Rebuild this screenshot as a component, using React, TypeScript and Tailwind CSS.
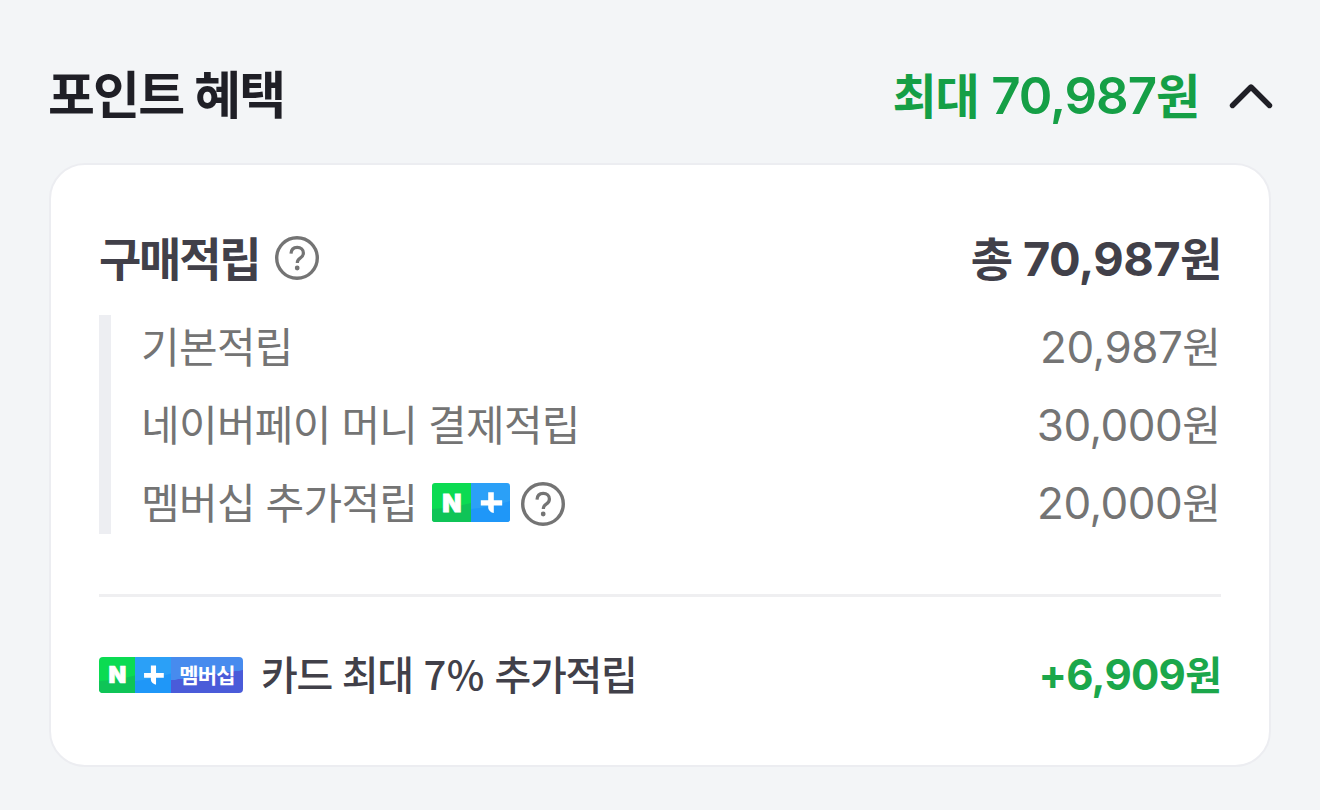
import React from 'react';

const savings = [
  { label: '기본적립', amount: '20,987' },
  { label: '네이버페이 머니 결제적립', amount: '30,000' },
  { label: '멤버십 추가적립', amount: '20,000', membership: true },
];

function HelpIcon() {
  return (
    <svg width="44" height="44" viewBox="0 0 44 44" fill="none" className="shrink-0 text-[#747474]">
      <circle cx="22" cy="22" r="20.3" stroke="currentColor" strokeWidth="3.4" />
      <path
        d="M16 17.6c.2-3.8 2.5-6.3 6.2-6.3s6.2 2.3 6.2 5.6c0 2.5-1.2 3.9-3.2 5.2-2.2 1.4-2.9 2.3-2.9 4.9"
        stroke="currentColor"
        strokeWidth="3.2"
      />
      <circle cx="22.2" cy="32" r="2.4" fill="currentColor" />
    </svg>
  );
}

function NaverPlusMark({ size }: { size: number }) {
  return (
    <svg width={size * 2} height={size} viewBox="0 0 78 39" className="block shrink-0">
      <rect width="39" height="39" fill="#0bdb52" />
      <path d="M0 26 Q20 25 39 20 V39 H0Z" fill="#0fc457" />
      <rect x="39" width="39" height="39" fill="#2ba0f7" />
      <path d="M39 26 Q60 24 78 18 V39 H39Z" fill="#1f97f8" />
      <text
        x="19.8"
        y="28.7"
        textAnchor="middle"
        fill="#fff"
        stroke="#fff"
        strokeWidth="0.8"
        className="font-[Inter,sans-serif] text-[25px] font-black"
      >
        N
      </text>
      <path d="M56.2 9.2h5.6v8h8.4v5.2h-8.4v7.6c-3-.4-5.2-2.4-5.6-5v-2.6h-7.4v-5.2h7.4z" fill="#fff" />
    </svg>
  );
}

type AmountProps = { value: string; prefix?: string; className: string; valueClassName: string };

function Amount({ value, prefix, className, valueClassName }: AmountProps) {
  return (
    <span className={`whitespace-nowrap ${className}`}>
      {prefix && <span>{prefix} </span>}
      <span className={`font-[Inter,sans-serif] ${valueClassName}`}>{value}</span>원
    </span>
  );
}

export default function App() {
  return (
    <div className="min-h-screen bg-[#f3f5f7] px-[49px] font-['Noto_Sans_CJK_KR',sans-serif]">
      {/* Header */}
      <div className="flex h-[163px] items-center justify-between pt-[20px]">
        <h2 className="-ml-px text-[51px] leading-[60px] font-bold tracking-[-1.8px] text-[#1f1f26] [word-spacing:1px]">
          포인트 혜택
        </h2>
        <div className="-mr-0.5 flex items-center gap-[30px]">
          <Amount
            value="70,987"
            prefix="최대"
            className="pt-[5px] text-[48px] leading-[60px] font-bold tracking-[-1.1px] text-[#159f46] [word-spacing:3px]"
            valueClassName="text-[51px] font-semibold tracking-[-1.1px]"
          />
          <svg width="44" height="26" viewBox="0 0 44 26" fill="none" className="mt-2">
            <path
              d="M3.5 22.5 22 4l18.5 18.5"
              stroke="#1f1f26"
              strokeWidth="5.4"
              strokeLinecap="round"
              strokeLinejoin="round"
            />
          </svg>
        </div>
      </div>

      {/* Benefit card */}
      <div className="h-[604px] rounded-[36px] border-2 border-[#ecedf1] bg-white px-12 pt-[62px]">
        <div className="flex h-[62px] items-center justify-between text-[46px] font-bold text-[#414049]">
          <div className="flex items-center gap-4">
            <span className="pb-1 leading-[58px] tracking-[-2.2px]">구매적립</span>
            <HelpIcon />
          </div>
          <Amount
            value="70,987"
            prefix="총"
            className="pb-0.5 leading-[58px] tracking-[-1.2px] [word-spacing:2px]"
            valueClassName="text-[47px] tracking-[-0.6px]"
          />
        </div>

        <ul className="mt-[26px] flex flex-col gap-[15px] border-l-12 border-[#edeef2] pl-[30px] text-[42px] leading-[60px] text-[#747474]">
          {savings.map((item) => (
            <li key={item.label} className="flex h-[63px] items-center justify-between">
              <div className="flex items-center gap-[11px]">
                <span className="pb-[3px] tracking-[-0.7px] [word-spacing:2px]">{item.label}</span>
                {item.membership && (
                  <>
                    <span className="ml-1 overflow-hidden rounded-[3px]">
                      <NaverPlusMark size={39} />
                    </span>
                    <span className="pt-0.5">
                      <HelpIcon />
                    </span>
                  </>
                )}
              </div>
              <Amount value={item.amount} className="pb-px" valueClassName="text-[44px] tracking-[-0.5px]" />
            </li>
          ))}
        </ul>

        <hr className="mt-[60px] border-t-[3px] border-[#efeff1]" />

        {/* Membership card */}
        <div className="mt-[48px] flex h-[60px] items-center justify-between text-[40px] leading-[56px]">
          <div className="flex items-center gap-[18px] text-[#414049]">
            <span className="flex h-9 w-36 overflow-hidden rounded-[4px]">
              <NaverPlusMark size={36} />
              <span className="flex h-9 w-[72px] items-center justify-center bg-linear-[172deg,#478bee_50%,#4a5bd9_51%] pb-0.5 text-[21px] leading-9 font-bold tracking-[-0.8px] text-white">
                멤버십
              </span>
            </span>
            <span className="pb-1 font-medium tracking-[-1.3px] [word-spacing:2px]">
              카드 최대 <span className="ml-px tracking-[0.5px]">7%</span> 추가적립
            </span>
          </div>
          <Amount
            value="+6,909"
            className="pb-0.5 font-bold tracking-[-1px] text-[#1ba74b]"
            valueClassName="text-[42px] tracking-[-0.7px]"
          />
        </div>
      </div>
    </div>
  );
}
